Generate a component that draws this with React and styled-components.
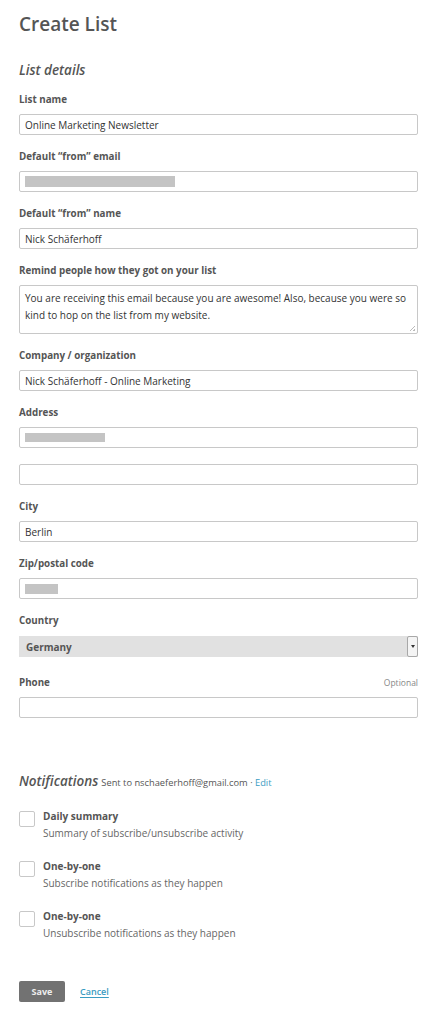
import React from "react";
import styled, { createGlobalStyle } from "styled-components";

const GlobalStyle = createGlobalStyle`
  html, body {
    margin: 0;
    padding: 0;
    background: #fff;
  }
  body {
    font-family: "Open Sans", "DejaVu Sans", sans-serif;
    color: #555;
  }
`;

const Page = styled.div`
  padding: 10px 11px 20px 19px;
`;

const Title = styled.h1`
  margin: 0;
  font-size: 19px;
  line-height: 28px;
  font-weight: 600;
  color: #555;
`;

const SectionHeading = styled.h2`
  margin: ${({ $top }) => $top || 22}px 0 13px;
  font-size: 13.5px;
  line-height: 20px;
  font-weight: 600;
  font-style: italic;
  color: #555;
  display: flex;
  align-items: baseline;
  gap: 3px;
`;

const HeadingNote = styled.span`
  font-size: 9.3px;
  font-style: normal;
  font-weight: 400;
  color: #555;

  a {
    color: #3a9cc2;
    text-decoration: none;
  }
`;

const Field = styled.div`
  display: flex;
  flex-direction: column;
  gap: ${({ $gap }) => $gap || 7}px;
  margin-bottom: ${({ $after }) => $after || 15}px;
`;

const LabelRow = styled.div`
  display: flex;
  justify-content: space-between;
  align-items: baseline;
`;

const Label = styled.label`
  font-size: 9.8px;
  line-height: 14px;
  font-weight: 700;
  color: #555;
`;

const Optional = styled.span`
  font-size: 8.5px;
  color: #888;
`;

const Input = styled.div`
  box-sizing: border-box;
  height: 21px;
  border: 1px solid #c8c8c8;
  border-radius: 2px;
  padding: 0 5px;
  display: flex;
  align-items: center;
  font-size: 10px;
  color: #333;
  background: #fff;

  & + & {
    margin-top: 16px;
  }
`;

const Redacted = styled.span`
  display: block;
  width: ${({ $w }) => $w}px;
  height: ${({ $h }) => $h || 10}px;
  background: #c4c4c4;
`;

const TextArea = styled.div`
  position: relative;
  box-sizing: border-box;
  height: 49px;
  border: 1px solid #c8c8c8;
  border-radius: 2px;
  padding: 4px 5px;
  font-size: 10px;
  line-height: 17px;
  color: #333;

  &::after {
    content: "";
    position: absolute;
    right: 2px;
    bottom: 2px;
    width: 5px;
    height: 5px;
    background: linear-gradient(135deg, transparent 45%, #bbb 45%, #bbb 55%, transparent 55%, transparent 75%, #bbb 75%);
  }
`;

const Select = styled.div`
  box-sizing: border-box;
  height: 21px;
  background: #e1e1e1;
  display: flex;
  align-items: center;
  justify-content: space-between;
  padding-left: 7px;
  font-size: 10px;
  font-weight: 700;
  color: #555;
`;

const SelectArrow = styled.span`
  box-sizing: border-box;
  width: 11px;
  height: 21px;
  border: 1px solid #a8a8a8;
  border-radius: 2px;
  background: #f4f4f4;
  display: flex;
  align-items: center;
  justify-content: center;

  &::before {
    content: "";
    border-left: 2px solid transparent;
    border-right: 2px solid transparent;
    border-top: 3px solid #333;
  }
`;

const CheckList = styled.div`
  display: flex;
  flex-direction: column;
  gap: 19px;
  margin-top: 16px;
`;

const CheckRow = styled.div`
  display: flex;
  gap: 8px;
  align-items: flex-start;
`;

const Box = styled.span`
  box-sizing: border-box;
  width: 16px;
  height: 16px;
  border: 1px solid #c8c8c8;
  border-radius: 2px;
  background: #fff;
  margin-top: 2px;
  flex-shrink: 0;
`;

const CheckText = styled.div`
  display: flex;
  flex-direction: column;
  gap: 3px;
`;

const CheckTitle = styled.span`
  font-size: 10px;
  line-height: 14px;
  font-weight: 700;
  color: #555;
`;

const CheckDesc = styled.span`
  font-size: 10px;
  line-height: 14px;
  color: #666;
`;

const Actions = styled.div`
  display: flex;
  align-items: center;
  gap: 15px;
  margin-top: 41px;
`;

const SaveButton = styled.button`
  box-sizing: border-box;
  width: 46px;
  height: 21px;
  border: none;
  border-radius: 2px;
  background: #727272;
  color: #eee;
  font-family: inherit;
  font-size: 9px;
  font-weight: 700;
  padding: 0;
`;

const CancelLink = styled.a`
  font-size: 9px;
  font-weight: 600;
  color: #3a9cc2;
  text-decoration: underline;
  text-underline-offset: 2px;
`;

const fields = [
  { label: "List name", value: "Online Marketing Newsletter" },
  { label: "Default \u201cfrom\u201d email", redact: 150 },
  { label: "Default \u201cfrom\u201d name", value: "Nick Sch\u00e4ferhoff" },
];

const checks = [
  { title: "Daily summary", desc: "Summary of subscribe/unsubscribe activity" },
  { title: "One-by-one", desc: "Subscribe notifications as they happen" },
  { title: "One-by-one", desc: "Unsubscribe notifications as they happen" },
];

export default function App() {
  return (
    <>
      <GlobalStyle />
      <Page>
        <Title>Create List</Title>
        <SectionHeading>List details</SectionHeading>

        {fields.map((f) => (
          <Field key={f.label}>
            <Label>{f.label}</Label>
            <Input>{f.redact ? <Redacted $w={f.redact} $h={11} /> : f.value}</Input>
          </Field>
        ))}

        <Field>
          <Label>Remind people how they got on your list</Label>
          <TextArea>
            You are receiving this email because you are awesome! Also, because you were so kind to hop on the list from my website.
          </TextArea>
        </Field>

        <Field>
          <Label>Company / organization</Label>
          <Input>Nick Schäferhoff - Online Marketing</Input>
        </Field>

        <Field>
          <Label>Address</Label>
          <div>
            <Input><Redacted $w={80} $h={9} /></Input>
            <Input />
          </div>
        </Field>

        <Field>
          <Label>City</Label>
          <Input>Berlin</Input>
        </Field>

        <Field>
          <Label>Zip/postal code</Label>
          <Input><Redacted $w={33} $h={10} /></Input>
        </Field>

        <Field $gap={8} $after={19}>
          <Label>Country</Label>
          <Select>
            Germany
            <SelectArrow />
          </Select>
        </Field>

        <Field>
          <LabelRow>
            <Label>Phone</Label>
            <Optional>Optional</Optional>
          </LabelRow>
          <Input />
        </Field>

        <SectionHeading $top={53}>
          Notifications
          <HeadingNote>
            Sent to nschaeferhoff@gmail.com · <a href="#">Edit</a>
          </HeadingNote>
        </SectionHeading>

        <CheckList>
          {checks.map((c, i) => (
            <CheckRow key={i}>
              <Box />
              <CheckText>
                <CheckTitle>{c.title}</CheckTitle>
                <CheckDesc>{c.desc}</CheckDesc>
              </CheckText>
            </CheckRow>
          ))}
        </CheckList>

        <Actions>
          <SaveButton>Save</SaveButton>
          <CancelLink href="#">Cancel</CancelLink>
        </Actions>
      </Page>
    </>
  );
}
